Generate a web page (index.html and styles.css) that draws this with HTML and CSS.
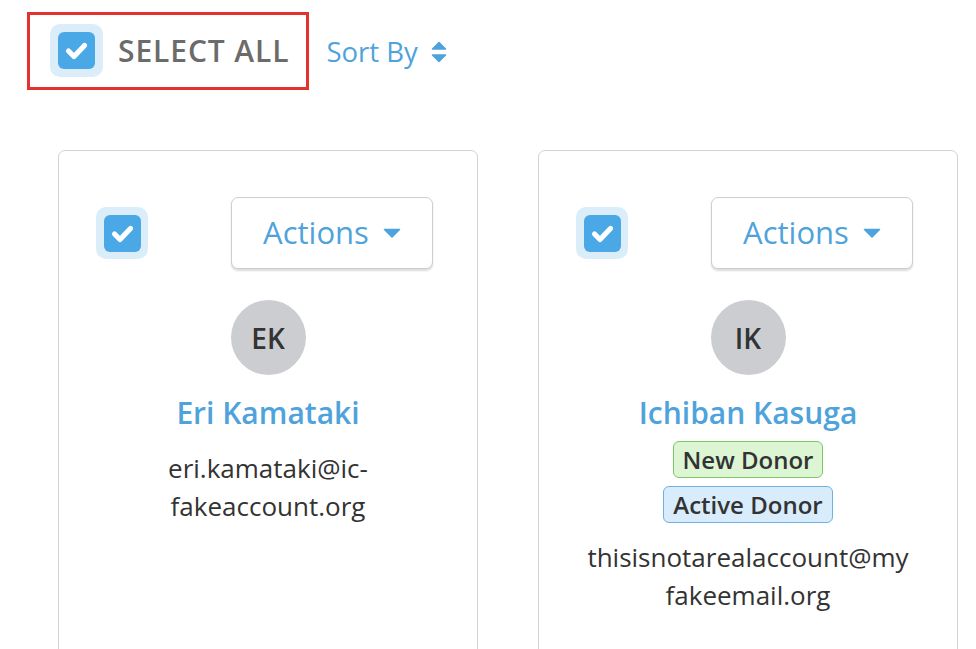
FILE: index.html
```html
<!DOCTYPE html>
<html lang="en">
<head>
<meta charset="utf-8">
<title>Donors</title>
<link rel="stylesheet" href="styles.css">
</head>
<body>
<div class="toolbar">
  <div class="select-all">
    <span class="check halo">
      <span class="box"><svg viewBox="0 0 37 37" width="37" height="37"><path d="M10.5 19 L16 24.5 L26.5 13.5" fill="none" stroke="#fff" stroke-width="5.2" stroke-linecap="round" stroke-linejoin="round"/></svg></span>
    </span>
    <span class="select-label">SELECT ALL</span>
  </div>
  <div class="sort">
    <span>Sort By</span>
    <svg class="sort-icon" viewBox="0 0 16 22" width="16" height="22"><path d="M8 1.5 L14.5 8 H1.5 Z" fill="#4fa3dc" stroke="#4fa3dc" stroke-width="1.5" stroke-linejoin="round"/><path d="M8 20.5 L14.5 14 H1.5 Z" fill="#4fa3dc" stroke="#4fa3dc" stroke-width="1.5" stroke-linejoin="round"/></svg>
  </div>
</div>

<div class="cards">
  <div class="card">
    <div class="card-head">
      <span class="check halo">
        <span class="box"><svg viewBox="0 0 37 37" width="37" height="37"><path d="M10.5 19 L16 24.5 L26.5 13.5" fill="none" stroke="#fff" stroke-width="5.2" stroke-linecap="round" stroke-linejoin="round"/></svg></span>
      </span>
      <button class="actions">Actions <svg class="caret" viewBox="0 0 18 10" width="18" height="10"><path d="M1.5 1.5 H16.5 L9 9 Z" fill="#4fa3dc" stroke="#4fa3dc" stroke-width="1.5" stroke-linejoin="round"/></svg></button>
    </div>
    <div class="avatar">EK</div>
    <div class="name">Eri Kamataki</div>
    <div class="email">eri.kamataki@ic-fakeaccount.org</div>
  </div>

  <div class="card">
    <div class="card-head">
      <span class="check halo">
        <span class="box"><svg viewBox="0 0 37 37" width="37" height="37"><path d="M10.5 19 L16 24.5 L26.5 13.5" fill="none" stroke="#fff" stroke-width="5.2" stroke-linecap="round" stroke-linejoin="round"/></svg></span>
      </span>
      <button class="actions">Actions <svg class="caret" viewBox="0 0 18 10" width="18" height="10"><path d="M1.5 1.5 H16.5 L9 9 Z" fill="#4fa3dc" stroke="#4fa3dc" stroke-width="1.5" stroke-linejoin="round"/></svg></button>
    </div>
    <div class="avatar">IK</div>
    <div class="name">Ichiban Kasuga</div>
    <div class="badges">
      <span class="badge badge-new">New Donor</span>
      <span class="badge badge-active">Active Donor</span>
    </div>
    <div class="email email-tight">thisisnotarealaccount@myfakeemail.org</div>
  </div>
</div>
</body>
</html>
```

FILE: styles.css
```css
* { box-sizing: border-box; }

html, body {
  margin: 0;
  background: #fff;
  font-family: "Open Sans", "Liberation Sans", sans-serif;
  color: #333;
}

body { overflow: hidden; height: 649px; }

.toolbar {
  display: flex;
  align-items: center;
  padding: 12px 0 0 27px;
}

.select-all {
  display: flex;
  align-items: center;
  gap: 15px;
  border: 3px solid #e5312f;
  padding: 9px 17px 10px 20px;
}

.halo {
  display: flex;
  align-items: center;
  justify-content: center;
  width: 53px;
  height: 53px;
  background: #dcedfa;
  border-radius: 10px;
}

.box {
  display: block;
  width: 37px;
  height: 37px;
  background: #4aa8e6;
  border-radius: 6px;
}

.box svg { display: block; }

.select-label {
  font-size: 30px;
  font-weight: 600;
  letter-spacing: 0.9px;
  color: #6b6b6b;
  line-height: 38px;
}

.sort {
  display: flex;
  align-items: center;
  gap: 13px;
  margin-left: 17px;
  color: #4fa3dc;
  font-size: 27.5px;
  font-weight: 500;
}

.sort-icon { display: block; margin-top: 1px; }

.cards {
  display: flex;
  gap: 60px;
  padding: 60px 0 0 58px;
}

.card {
  width: 420px;
  height: 560px;
  flex: none;
  border: 1px solid #d2d2d2;
  border-radius: 7px;
  padding: 46px 37px 0 37px;
  display: flex;
  flex-direction: column;
  align-items: center;
  text-align: center;
}

.card-head {
  width: 100%;
  display: flex;
  align-items: center;
  justify-content: space-between;
  padding-right: 7px;
}

.card-head .halo { width: 52px; height: 52px; }

.actions {
  width: 202px;
  height: 72px;
  background: #fff;
  border: 1px solid #cfcfcf;
  border-radius: 7px;
  box-shadow: 0 2px 2px rgba(0, 0, 0, 0.14);
  font-family: inherit;
  font-size: 31px;
  font-weight: 500;
  color: #4fa3dc;
  display: flex;
  align-items: center;
  justify-content: center;
  gap: 14px;
  padding: 0 0 2px 0;
}

.caret { display: block; margin-top: 2px; }

.avatar {
  margin-top: 31px;
  width: 75px;
  height: 75px;
  border-radius: 50%;
  background: #cbcdd1;
  color: #333;
  font-size: 28px;
  font-weight: 600;
  display: flex;
  align-items: center;
  justify-content: center;
}

.name {
  margin-top: 19px;
  font-size: 30px;
  font-weight: 600;
  line-height: 38px;
  color: #4fa3dc;
}

.email {
  margin-top: 17px;
  width: 326px;
  font-size: 26px;
  line-height: 38px;
  color: #333;
  overflow-wrap: anywhere;
}

.email-tight {
  margin-top: 15px;
}

.badges {
  margin-top: 9px;
  display: flex;
  flex-direction: column;
  align-items: center;
  gap: 8px;
}

.badge {
  display: block;
  height: 37px;
  line-height: 35px;
  padding: 0 9px;
  font-size: 24px;
  font-weight: 600;
  color: #333;
  border-radius: 6px;
  border: 1px solid;
}

.badge-new {
  background: #dcf5d3;
  border-color: #7ec56a;
}

.badge-active {
  background: #d8ecfb;
  border-color: #6cb3e3;
}
```
